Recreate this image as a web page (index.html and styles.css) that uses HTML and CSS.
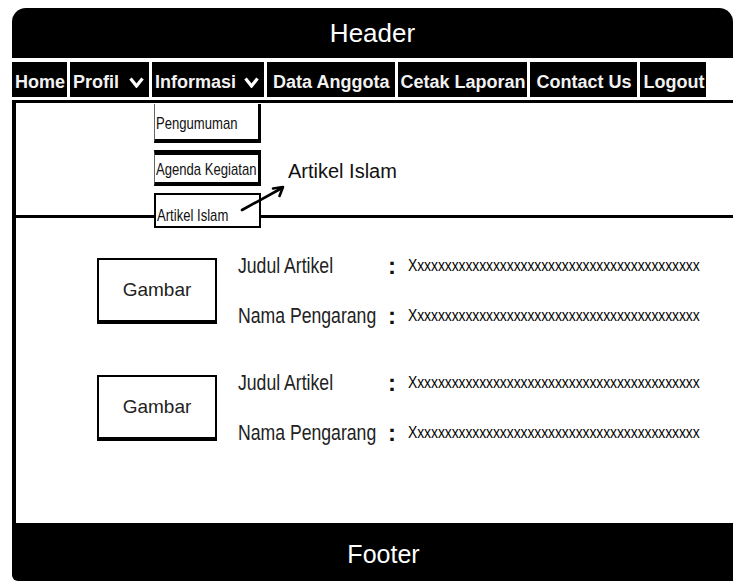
FILE: index.html
```html
<!doctype html>
<html>
<head>
<meta charset="utf-8">
<title>Artikel Islam</title>
<link rel="stylesheet" href="styles.css">
</head>

<body>
<div class="page">
	<div class="header">Header</div>

	<ul class="nav">
		<li>Home</li>
		<li class="has_sub wide_gap">Profil <svg class="chev" viewBox="0 0 15 11"><polyline points="1.5,1.5 7.5,9 13.5,1.5"/></svg></li>
		<li class="has_sub">Informasi <svg class="chev" viewBox="0 0 15 11"><polyline points="1.5,1.5 7.5,9 13.5,1.5"/></svg></li>
		<li class="roomy">Data Anggota</li>
		<li class="tight">Cetak Laporan</li>
		<li class="roomy">Contact Us</li>
		<li>Logout</li>
	</ul>

	<div class="main">
		<div class="top"></div>

		<div class="dropdown">
			<ul class="sub_list">
				<li class="sub_a"><span class="nw">Pengumuman</span></li>
				<li class="sub_b"><span class="nw">Agenda Kegiatan</span></li>
				<li class="sub_c"><span class="nw">Artikel Islam</span></li>
			</ul>
			<div class="page_title">Artikel Islam</div>
			<svg class="arrow" viewBox="0 0 50 32"><path d="M3 28 L43 6"/><path d="M34 6.5 L44 5 L40.5 14"/></svg>
		</div>

		<div class="articles">
			<div class="article">
				<div class="pic">Gambar</div>
				<div class="info">
					<div class="row"><span class="label">Judul Artikel</span><span class="colon">:</span><span class="value"><span>Xxxxxxxxxxxxxxxxxxxxxxxxxxxxxxxxxxxxxxxxxx</span></span></div>
					<div class="row"><span class="label">Nama Pengarang</span><span class="colon">:</span><span class="value"><span>Xxxxxxxxxxxxxxxxxxxxxxxxxxxxxxxxxxxxxxxxxx</span></span></div>
				</div>
			</div>
			<div class="article">
				<div class="pic">Gambar</div>
				<div class="info">
					<div class="row"><span class="label">Judul Artikel</span><span class="colon">:</span><span class="value"><span>Xxxxxxxxxxxxxxxxxxxxxxxxxxxxxxxxxxxxxxxxxx</span></span></div>
					<div class="row"><span class="label">Nama Pengarang</span><span class="colon">:</span><span class="value"><span>Xxxxxxxxxxxxxxxxxxxxxxxxxxxxxxxxxxxxxxxxxx</span></span></div>
				</div>
			</div>
		</div>
	</div>

	<div class="footer">Footer</div>
</div>
</body>
</html>
```

FILE: styles.css
```css
body {margin: 0; padding: 0; background: #fff; font-family: "Liberation Sans", Arial, sans-serif; color: #111;}
.page {width: 721px; margin: 8px 0 0 12px;}

.header {height: 50px; background: #000; color: #fff; border-radius: 14px 14px 0 0; text-align: center; font-size: 26px; line-height: 50px;}

.nav {list-style: none; margin: 4px 0 0 0; padding: 0; display: flex; gap: 3px;}
.nav li {height: 35px; box-sizing: border-box; padding: 5px 2px 0 3px; background: #000; color: #f2f2f2; font-weight: bold; font-size: 18px; line-height: 30px; white-space: nowrap; display: flex; align-items: center;}
.nav .roomy {padding-left: 6px; padding-right: 6px;}
.nav .tight {padding-left: 2px; padding-right: 2px;}
.nav .has_sub {padding-right: 5px;}
.chev {width: 15px; height: 11px; margin-left: 8px;}
.wide_gap .chev {margin-left: 10px;}
.chev polyline {fill: none; stroke: #fff; stroke-width: 3.2;}

.main {position: relative; height: 423px; box-sizing: border-box; margin-top: 3px; border-top: 3px solid #000; border-left: 4px solid #000;}
.top {height: 112px; border-bottom: 3px solid #000;}

.dropdown {position: absolute; left: 138px; top: 1px; display: flex;}
.sub_list {list-style: none; margin: 0; padding: 0; width: 107px; display: flex; flex-direction: column; gap: 7px;}
.sub_list li {background: #fff; font-size: 17px; line-height: 20px; padding-left: 1px; white-space: nowrap; box-sizing: content-box;}
.nw {display: inline-block; transform: scaleX(0.77); transform-origin: left center;}
.sub_a {height: 25px; padding-top: 10px; border-left: 1px solid #666; border-right: 3px solid #000; border-bottom: 4px solid #000;}
.sub_b {height: 20px; padding-top: 5px; padding-bottom: 2px; border-top: 5px solid #000; border-left: 1px solid #666; border-right: 3px solid #000; border-bottom: 4px solid #000;}
.sub_c {height: 20px; padding-top: 11px; border: 2px solid #000;}

.page_title {margin: 55px 0 0 27px; font-size: 20px; line-height: 24px; white-space: nowrap;}
.arrow {position: absolute; left: 85px; top: 78px; width: 50px; height: 32px;}
.arrow path {fill: none; stroke: #000; stroke-width: 2.6; stroke-linecap: round; stroke-linejoin: round;}

.articles {padding: 23px 0 0 81px; display: flex; flex-direction: column; gap: 17px;}
.article {display: flex; align-items: center; gap: 21px; height: 100px;}
.pic {flex: none; width: 120px; height: 66px; box-sizing: border-box; border: 2px solid #000; border-bottom-width: 4px; display: flex; align-items: center; justify-content: center; font-size: 19px; color: #222;}
.info {display: flex; flex-direction: column;}
.row {display: flex; align-items: center; height: 50px;}
.label {flex: none; width: 150px; font-size: 21.5px; color: #222; white-space: nowrap; transform: scaleX(0.82); transform-origin: left center;}
.colon {flex: none; width: 20px; font-weight: bold; font-size: 24px; line-height: 24px;}
.value {flex: none; width: 292px; white-space: nowrap;}
.value span {display: inline-block; font-size: 17px; letter-spacing: -0.1px; color: #000; transform: scaleX(0.82); transform-origin: left center;}

.footer {height: 58px; box-sizing: border-box; padding: 4px 0 0 22px; background: #000; color: #fff; text-align: center; font-size: 25px; line-height: 54px; border-bottom-left-radius: 6px;}
```
